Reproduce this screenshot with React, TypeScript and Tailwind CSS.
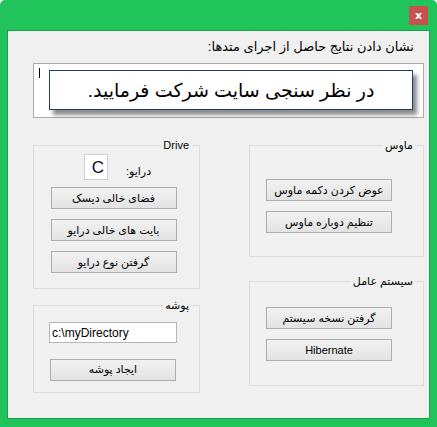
const FONT = "font-['Liberation_Sans','DejaVu_Sans',sans-serif]"

function Btn({ label }: { label: string }) {
  return (
    <button
      dir="rtl"
      className={`${FONT} h-[22px] w-[126px] border border-[#adadad] bg-linear-to-b from-[#f2f2f2] to-[#e3e3e3] text-[11px] leading-none text-black`}
    >
      {label}
    </button>
  )
}

function Group({
  title,
  className,
  children,
}: {
  title: string
  className: string
  children: React.ReactNode
}) {
  return (
    <div className={`relative border border-[#dcdcdc] ${className}`}>
      <span
        dir="rtl"
        className={`${FONT} absolute -top-[9px] right-[8px] bg-[#f0f0f0] px-[2px] text-[11px] leading-[16px] text-black`}
      >
        {title}
      </span>
      {children}
    </div>
  )
}

export default function App() {
  return (
    <div className="flex h-[427px] w-[437px] flex-col rounded-t-[5px] bg-[#21c35b]">
      <div className="flex h-[30px] items-start justify-end pr-[9px] pt-[6px]">
        <div className="flex h-[19px] w-[19px] items-center justify-center bg-[#c75050] font-['DejaVu_Sans',sans-serif] text-[11px] font-bold leading-none text-white">
          x
        </div>
      </div>
      <div className="mx-[7px] h-[389px] border border-[#1a9f4a] bg-[#f0f0f0]">
        <div className="flex flex-col pl-[25px] pr-[5px] pt-[8px]">
          <p dir="rtl" className={`${FONT} pr-[10px] text-[13px] leading-[16px] text-black`}>
            نشان دادن نتایج حاصل از اجرای متدها:
          </p>
          <div className="relative mt-[8px] h-[55px] w-[391px] border border-[#ababab] bg-white pl-[15px] pr-[10px] pt-[6px]">
            <span className="absolute left-[5px] top-[4px] h-[10px] w-px bg-black" />
            <div className="flex h-[40px] items-center justify-center border border-[#1d3d6b] bg-white shadow-[4px_5px_4px_rgba(0,0,0,0.45)]">
              <span dir="rtl" className={`${FONT} text-[19px] leading-none text-black`}>
                در نظر سنجی سایت شرکت فرمایید.
              </span>
            </div>
          </div>

          <div className="mt-[27px] flex gap-[49px]">
            <div className="flex w-[167px] flex-col gap-[16px]">
              <Group title="Drive" className="h-[144px]">
                <div className="flex flex-col items-center pl-[17px] pr-[23px] pt-[8px]">
                  <div className="flex w-full items-center">
                    <div className="ml-[33px] flex h-[26px] w-[24px] items-center justify-end border border-[#cfcfcf] bg-white pr-[3px]">
                      <span className={`${FONT} text-[17px] leading-none text-[#0a0a2a]`}>C</span>
                    </div>
                    <span dir="rtl" className={`${FONT} ml-[18px] mt-[8px] text-[11px] leading-none text-black`}>
                      درایو:
                    </span>
                  </div>
                  <div className="mt-[7px] flex flex-col gap-[10px]">
                    <Btn label="فضای خالی دیسک" />
                    <Btn label="بایت های خالی درایو" />
                    <Btn label="گرفتن نوع درایو" />
                  </div>
                </div>
              </Group>
              <Group title="پوشه" className="h-[88px]">
                <div className="flex flex-col pl-[15px] pt-[16px]">
                  <div className="flex h-[21px] w-[128px] items-center border border-[#b5b5b5] bg-white pl-[2px]">
                    <span className={`${FONT} text-[12px] leading-none text-black`}>c:\myDirectory</span>
                  </div>
                  <div className="ml-[1px] mt-[12px]">
                    <Btn label="ایجاد پوشه" />
                  </div>
                </div>
              </Group>
            </div>

            <div className="flex w-[176px] flex-col gap-[24px]">
              <Group title="ماوس" className="h-[112px]">
                <div className="flex flex-col gap-[10px] pl-[16px] pt-[33px]">
                  <Btn label="عوض کردن دکمه ماوس" />
                  <Btn label="تنظیم دوباره ماوس" />
                </div>
              </Group>
              <Group title="سیستم عامل" className="h-[105px]">
                <div className="flex flex-col gap-[10px] pl-[16px] pt-[25px]">
                  <Btn label="گرفتن نسخه سیستم" />
                  <Btn label="Hibernate" />
                </div>
              </Group>
            </div>
          </div>
        </div>
      </div>
    </div>
  )
}
